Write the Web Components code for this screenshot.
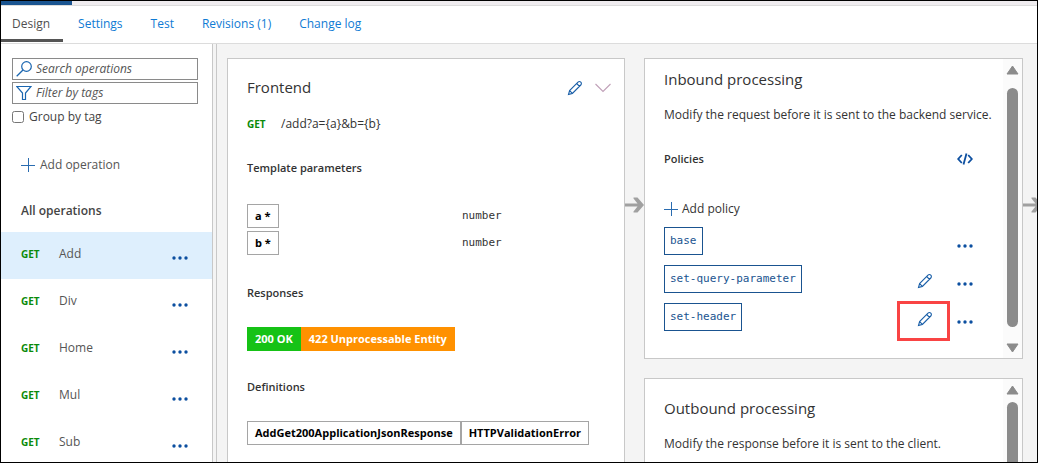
<!DOCTYPE html>
<html lang="en">
<head>
<meta charset="utf-8">
<title>API design</title>
<style>
html, body { margin: 0; height: 100%; }
body { font: 12px/16px "Open Sans", "Noto Sans", sans-serif; color: #333; }
</style>
</head>
<body>
<api-designer></api-designer>

<script>
const BASE = `
*, *::before, *::after { box-sizing: border-box; }
:host { display: block; box-sizing: border-box; }
button { font: inherit; color: inherit; background: none; border: 0; padding: 0; margin: 0; cursor: pointer; }
a { color: inherit; text-decoration: none; }
h2, h3, p { margin: 0; padding: 0; font-weight: 400; }
svg { display: block; }
`;

function define(name, css, html, setup) {
  const template = document.createElement('template');
  template.innerHTML = `<style>${BASE}${css}</style>${html}`;
  customElements.define(name, class extends HTMLElement {
    constructor() {
      super();
      this.attachShadow({ mode: 'open' }).append(template.content.cloneNode(true));
    }
    connectedCallback() { if (setup) setup(this, this.shadowRoot); }
  });
}

const ICONS = {
  pencil: [16, 16, '<path d="M1.5 14.5 2.600 10.600 11 2.200a1.900 1.900 0 0 1 2.800 2.800L5.400 13.400ZM2.600 10.600l2.800 2.800M9.700 3.500l2.800 2.800" fill="none" stroke="#1a5fa8" stroke-width="1.100"/>'],
  chevron: [16, 10, '<path d="M.5 1 8 8.500 15.500 1" fill="none" stroke="#c0a0b8" stroke-width="1.100"/>'],
  search: [16, 16, '<circle cx="10.500" cy="5.500" r="4.800" fill="none" stroke="#1a66b0" stroke-width="1.200"/><path d="M7 9 .7 15.300" stroke="#1a66b0" stroke-width="1.300"/>'],
  filter: [16, 16, '<path d="M.8 1.500H15L9.500 8v6.500h-3V8Z" fill="none" stroke="#1a66b0" stroke-width="1.200"/>'],
  plus: [14, 14, '<path d="M0 7.500h14M7.500 0v14" stroke="#2a6cb0" stroke-width="1"/>'],
  dots: [16, 6, '<g fill="#0c4fa0"><circle cx="2" cy="3" r="1.700"/><circle cx="8" cy="3" r="1.700"/><circle cx="14" cy="3" r="1.700"/></g>'],
  code: [16, 12, '<path d="M4.800 2 1.200 6l3.600 4M11.200 2l3.600 4-3.600 4M9.500.5l-3 11" fill="none" stroke="#0c4fa0" stroke-width="1.800"/>'],
  arrow: [19, 16, '<path d="M0 6.500h12.500L8.500 1.500V.5h4L19 8l-6.500 7.500h-4v-1l4-5H0Z" fill="#a0a0a0"/>']
};

define('ui-icon', ':host { flex: none; }', '<span></span>', (el, root) => {
  const [w, h, body] = ICONS[el.getAttribute('name')];
  root.querySelector('span').innerHTML =
    `<svg width="${w}" height="${h}" viewBox="0 0 ${w} ${h}" aria-hidden="true">${body}</svg>`;
});

define('tab-bar', `
:host { background: #fff; border-bottom: 1px solid #dcdcdc; }
.strip { height: 5px; background: #efecef; border-bottom: 1px solid #dcdcdc; }
.strip i { display: block; width: 71px; height: 4px; background: #1a5490; }
nav { display: flex; gap: 4px; padding-bottom: 1px; }
a { padding: 10px 13px 7px 11px; height: 36px; line-height: 16px; color: #0f7bd4; white-space: nowrap; }
a[aria-current] { color: #505050; border-bottom: 3px solid #555; }
`, `
<div class="strip"><i></i></div>
<nav><a href="#design" aria-current="page">Design</a><a href="#settings">Settings</a><a href="#test">Test</a><a href="#revisions">Revisions (1)</a><a href="#changelog">Change log</a></nav>
`);

define('operation-item', `
:host { height: 47px; padding: 0 24px 0 20px; }
:host([selected]) { background: #deeffd; }
.row { display: flex; align-items: center; height: 44px; }
b { width: 38px; font-size: 10px; color: #0a8a0a; }
a { flex: 1; color: #555; }
button { padding-top: 8px; }
`, `<div class="row"><b>GET</b><a href="#operation"><slot></slot></a><button aria-label="More actions"><ui-icon name="dots"></ui-icon></button></div>`);

define('operation-list', `
:host { background: #fff; border-right: 1px solid #c8c8c8; overflow: hidden; }
.search { display: grid; grid-template-columns: minmax(0, 1fr); gap: 2px; padding: 14px 14px 0 11px; }
.box { display: flex; align-items: center; height: 22px; padding-left: 3px; gap: 4px; border: 1px solid #8a8a8a; }
.box input { flex: 1; min-width: 0; border: 0; padding: 0; outline: 0; background: none; font: italic 12px/16px "Open Sans", "Noto Sans", sans-serif; }
.box input::placeholder { color: #555; opacity: 1; }
.group { display: flex; align-items: center; gap: 5px; height: 16px; margin-top: 3px; color: #444; }
.group input { width: 12px; height: 12px; margin: 0; }
.add { display: flex; align-items: center; gap: 5px; margin: 32px 0 0 20px; color: #555; }
h2 { margin: 30px 0 13px 20px; font: inherit; font-weight: 600; color: #444; }
`, `
<div class="search">
<label class="box"><ui-icon name="search"></ui-icon><input placeholder="Search operations" aria-label="Search operations"></label>
<label class="box"><ui-icon name="filter"></ui-icon><input placeholder="Filter by tags" aria-label="Filter by tags"></label>
<label class="group"><input type="checkbox"><span>Group by tag</span></label>
</div>
<button class="add"><ui-icon name="plus"></ui-icon><span>Add operation</span></button>
<h2>All operations</h2>
<operation-item selected>Add</operation-item><operation-item>Div</operation-item><operation-item>Home</operation-item><operation-item>Mul</operation-item><operation-item>Sub</operation-item>
`);

define('scroll-rail', `
:host { display: flex; flex-direction: column; align-items: center; width: 19px; padding: 6px 0 5px; background: #fbfbfb; }
.thumb { flex: 1; width: 11px; margin: var(--thumb-top, 13px) 0 16px; border-radius: 6px; background: #8b8b8b; }
`, `
<svg width="13" height="10"><path d="M6.500 1 12 9H1Z" fill="#8b8b8b" stroke="#8b8b8b" stroke-linejoin="round"/></svg>
<div class="thumb"></div>
<svg width="13" height="10"><path d="M6.500 9 12 1H1Z" fill="#8b8b8b" stroke="#8b8b8b" stroke-linejoin="round"/></svg>
`);

define('policy-row', `
:host { display: flex; align-items: center; height: 28px; }
.name { height: 28px; padding: 0 5px; border: 1px solid #1a5490; color: #1a5490; font: 11px/26px "DejaVu Sans Mono", monospace; }
.tools { display: flex; align-items: center; gap: 24px; margin-left: auto; }
.edit { position: relative; display: none; padding-top: 4px; }
:host([editable]) .edit { display: block; }
:host([marked]) .edit::after { content: ""; position: absolute; inset: -6px -17px -14px -20px; border: 3px solid #f94444; }
.more { padding-top: 10px; }
`, `<button class="name"><slot></slot></button><span class="tools"><button class="edit" aria-label="Edit policy"><ui-icon name="pencil"></ui-icon></button><button class="more" aria-label="More actions"><ui-icon name="dots"></ui-icon></button></span>`);

define('processing-card', `
:host { display: flex; min-height: 300px; background: #fff; border: 1px solid #c8c8c8; }
.body { flex: 1; min-width: 0; padding: var(--card-top, 10px) 30px 27px 19px; }
h2 { font-size: 15px; line-height: 20px; }
p { margin-top: 18px; white-space: nowrap; }
.head { display: flex; align-items: center; justify-content: space-between; height: 16px; margin-top: 28px; }
h3 { font-size: 11px; line-height: 16px; font-weight: 600; }
.add { display: flex; align-items: center; gap: 4px; margin: 34px 0 10px; }
.rows { display: grid; gap: 10px; }
`, `
<div class="body">
<h2><slot name="title"></slot></h2>
<p><slot name="text"></slot></p>
<div class="policies">
<div class="head"><h3>Policies</h3><button aria-label="Code editor"><ui-icon name="code"></ui-icon></button></div>
<button class="add"><ui-icon name="plus"></ui-icon><span>Add policy</span></button>
<div class="rows"><slot></slot></div>
</div>
</div>
<scroll-rail></scroll-rail>
`, (el, root) => {
  if (!el.querySelector('policy-row')) root.querySelector('.policies')?.remove();
});

define('frontend-card', `
:host { background: #fff; border: 1px solid #c8c8c8; padding: 18px 13px 0 19px; }
header { display: flex; align-items: center; height: 22px; }
h2 { flex: 1; font-size: 15px; line-height: 20px; padding-bottom: 2px; }
header button + button { margin-left: 12px; }
.url { display: flex; gap: 15px; margin-top: 17px; }
.url b { width: 19px; font-size: 10px; color: #0a8a0a; }
h3 { margin: 28px 0 26px; font-size: 11px; line-height: 16px; font-weight: 600; }
table { width: 100%; margin-top: 28px; border-collapse: collapse; table-layout: fixed; }
th, td { padding: 0 0 3px; text-align: left; font-weight: 400; }
tr:last-child > * { padding-bottom: 2px; }
th { width: 215px; }
td { font: 11px/24px "DejaVu Sans Mono", monospace; vertical-align: top; }
.tags { display: flex; }
.tag { display: block; width: max-content; height: 24px; padding: 0 7px; border: 1px solid #a5a5a5; color: #000; font-weight: 700; font-size: 11px; line-height: 22px; white-space: nowrap; }
.ok { background: #16c216; border-color: #16c216; color: #fff; }
.warn { background: #ff9100; border-color: #ff9100; color: #fff; }
`, `
<header><h2>Frontend</h2><button aria-label="Edit frontend"><ui-icon name="pencil"></ui-icon></button><button aria-label="Expand"><ui-icon name="chevron"></ui-icon></button></header>
<div class="url"><b>GET</b><span>/add?a={a}&amp;b={b}</span></div>
<h3>Template parameters</h3>
<table><tbody><tr><th scope="row"><span class="tag">a *</span></th><td>number</td></tr><tr><th scope="row"><span class="tag">b *</span></th><td>number</td></tr></tbody></table>
<h3>Responses</h3>
<div class="tags"><button class="tag ok">200 OK</button><button class="tag warn">422 Unprocessable Entity</button></div>
<h3>Definitions</h3>
<div class="tags"><button class="tag">AddGet200ApplicationJsonResponse</button><button class="tag">HTTPValidationError</button></div>
`);

define('api-designer', `
:host { display: flex; flex-direction: column; height: 100vh; overflow: hidden; border: 1px solid #000; background: #f4f4f4; }
main { flex: 1; min-height: 0; display: flex; overflow: hidden; }
operation-list { flex: none; width: 212px; }
.canvas { flex: 1; min-width: 0; display: grid; grid-template-columns: minmax(0, 398fr) 19px minmax(0, 379fr) 14px; grid-template-rows: minmax(0, 1fr); margin-left: 3px; padding: 14px 0 0 10px; border-left: 1px solid #c8c8c8; }
frontend-card { border-bottom: 0; }
.stack { display: flex; flex-direction: column; gap: 19px; }
processing-card { flex: none; }
.second { --thumb-top: 7px; --card-top: 19px; }
.link { padding-top: 139px; overflow: hidden; }
`, `
<tab-bar></tab-bar>
<main>
<operation-list></operation-list>
<div class="canvas">
<frontend-card></frontend-card>
<div class="link"><ui-icon name="arrow"></ui-icon></div>
<div class="stack">
<processing-card><span slot="title">Inbound processing</span><span slot="text">Modify the request before it is sent to the backend service.</span>
<policy-row>base</policy-row><policy-row editable>set-query-parameter</policy-row><policy-row editable marked>set-header</policy-row></processing-card>
<processing-card class="second"><span slot="title">Outbound processing</span><span slot="text">Modify the response before it is sent to the client.</span></processing-card>
</div>
<div class="link"><ui-icon name="arrow"></ui-icon></div>
</div>
</main>
`);
</script>
</body>
</html>
